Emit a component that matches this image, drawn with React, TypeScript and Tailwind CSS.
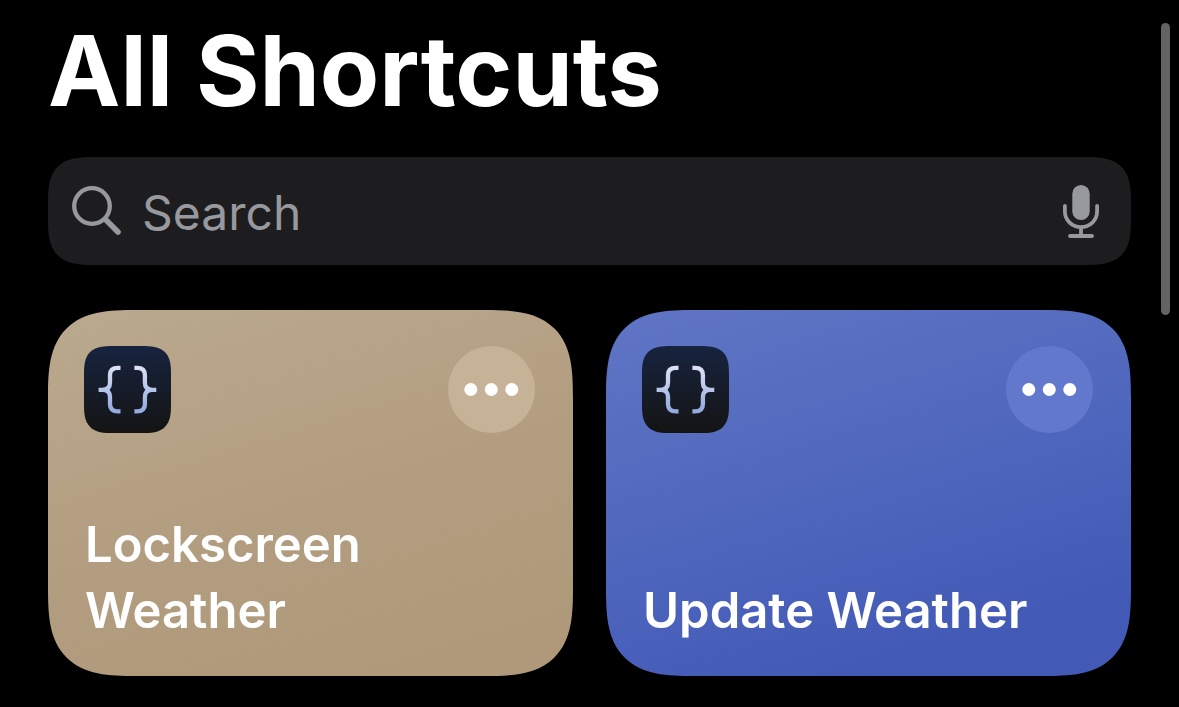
import { useId } from "react";

type Shortcut = { name: string; surface: string; menu: string };

const shortcuts: Shortcut[] = [
  {
    name: "Lockscreen Weather",
    surface: "bg-[linear-gradient(163deg,#baa98e_0%,#b39d80_52%,#ae9879_100%)]",
    menu: "bg-[#c6b296]",
  },
  {
    name: "Update Weather",
    surface: "bg-[linear-gradient(163deg,#6075c4_0%,#4d65bc_52%,#425ab6_85%,#425ab6_100%)]",
    menu: "bg-[#6178cd]",
  },
];

function SearchIcon() {
  return (
    <svg viewBox="0 0 50 50" className="size-[50px] shrink-0" fill="none" stroke="#98989f" strokeLinecap="round" aria-hidden="true">
      <circle cx="20" cy="20" r="17.8" strokeWidth="4.3" />
      <path d="M33.8 33.8 46 46" strokeWidth="5.6" />
    </svg>
  );
}

function MicIcon() {
  return (
    <svg viewBox="0 0 36 54" className="h-[54px] w-9" fill="none" stroke="#98989f" strokeWidth="3.8" strokeLinecap="round" aria-hidden="true">
      <rect x="9.3" y="1" width="17.4" height="35" rx="8.7" fill="#98989f" stroke="none" />
      <path d="M1.9 22v5.5a16.1 15.6 0 0 0 32.2 0V22M18 43.5V51M7 52h22" />
    </svg>
  );
}

function BracesIcon() {
  const id = useId();
  return (
    <svg viewBox="0 0 87 87" className="size-[87px]" fill="none" aria-hidden="true">
      <defs>
        <linearGradient id={id} gradientUnits="userSpaceOnUse" x1="0" y1="19" x2="0" y2="68">
          <stop offset="0" stopColor="#e0e2f6" />
          <stop offset="1" stopColor="#8fa8dc" />
        </linearGradient>
      </defs>
      <g stroke={`url(#${id})`} strokeWidth="4.3">
        <path d="M36.5 21.9H34Q26 21.9 26 29V36.5Q26 43.8 18.5 43.8H14.6M18.5 43.8Q26 43.8 26 51V58.2Q26 65.3 34 65.3H36.5" />
        <path d="M50.4 21.9H52.9Q60.9 21.9 60.9 29V36.5Q60.9 43.8 68.4 43.8H72.3M68.4 43.8Q60.9 43.8 60.9 51V58.2Q60.9 65.3 52.9 65.3H50.4" />
      </g>
    </svg>
  );
}

function MoreIcon() {
  return (
    <svg viewBox="0 0 87 87" className="size-[87px]" fill="#fff" aria-hidden="true">
      <circle cx="22.8" cy="43.5" r="6.5" />
      <circle cx="43.3" cy="43.5" r="6.5" />
      <circle cx="63.8" cy="43.5" r="6.5" />
    </svg>
  );
}

function ShortcutCard({ name, surface, menu }: Shortcut) {
  return (
    <li
      className={`flex min-h-[366px] flex-col justify-between rounded-[60px] pt-9 pr-[38px] pb-8 pl-9 supports-[corner-shape:squircle]:rounded-[88px] supports-[corner-shape:squircle]:[corner-shape:superellipse(1.55)] ${surface}`}
    >
      <div className="flex items-center justify-between">
        <span className="rounded-[20px] bg-linear-to-b from-[#17233f] to-[#141414] supports-[corner-shape:squircle]:rounded-[29px] supports-[corner-shape:squircle]:[corner-shape:superellipse(1.55)]">
          <BracesIcon />
        </span>
        <button type="button" aria-label={`Edit ${name}`} className={`rounded-full ${menu}`}>
          <MoreIcon />
        </button>
      </div>
      <h2 className="max-w-[400px] pl-px text-[49px] leading-[66px] font-semibold text-white">{name}</h2>
    </li>
  );
}

export default function App() {
  return (
    <div className="relative min-h-screen bg-black px-12 pt-[11px] pb-8 font-['Inter','Liberation_Sans',sans-serif]">
      <h1 className="text-[97px] leading-[120px] font-bold text-white">All Shortcuts</h1>
      <div className="mt-[26px] flex h-[108px] items-center gap-5 rounded-[30px] bg-[#1d1d1f] pr-8 pl-6 supports-[corner-shape:squircle]:rounded-[46px] supports-[corner-shape:squircle]:[corner-shape:superellipse(1.55)]">
        <SearchIcon />
        <input
          type="search"
          aria-label="Search shortcuts"
          placeholder="Search"
          className="h-full min-w-0 flex-1 bg-transparent pt-0.5 text-[48px] text-white outline-none placeholder:text-[#98989f]"
        />
        <button type="button" aria-label="Dictate">
          <MicIcon />
        </button>
      </div>
      <ul className="mt-[45px] grid grid-cols-2 gap-[33px]">
        {shortcuts.map((shortcut) => (
          <ShortcutCard key={shortcut.name} {...shortcut} />
        ))}
      </ul>
      <div className="absolute top-[23px] right-[9px] h-[292px] w-[9px] rounded-full bg-[#636363]" aria-hidden="true" />
    </div>
  );
}
